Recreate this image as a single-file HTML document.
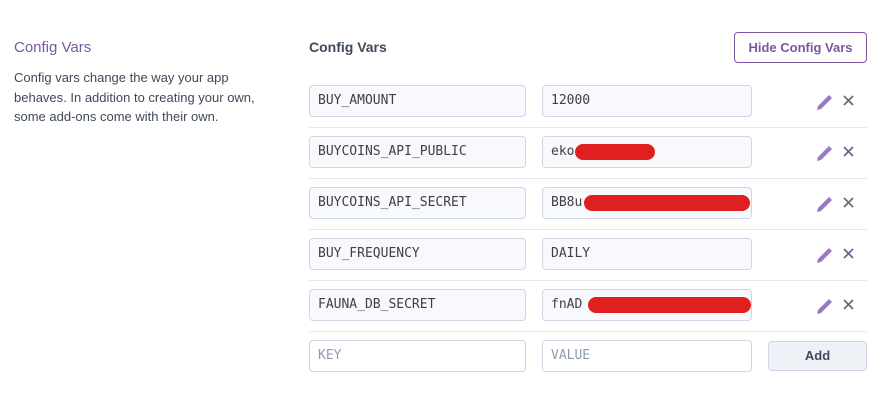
<!DOCTYPE html><html><head><style>
body{margin:0;width:883px;height:403px;background:#fff;font-family:"Liberation Sans",sans-serif;position:relative;overflow:hidden}
.a{position:absolute}
.t{left:14px;top:39px;font-size:15px;color:#79589f}
.d{left:14px;top:68px;width:270px;font-size:13px;line-height:19.5px;color:#3f4a5a}
.h{left:309px;top:39px;font-size:14px;font-weight:bold;color:#3f4a5a}
.btn{left:734px;top:32px;width:131px;height:29px;border:1px solid #79589f;border-radius:4px;color:#79589f;font-size:13px;font-weight:bold;text-align:center;line-height:29px}
.in{position:absolute;height:32px;border:1px solid #cfd7e6;border-radius:4px;background:#f7f9fd;box-sizing:border-box;font-family:"DejaVu Sans Mono",monospace;font-size:13px;color:#3f3f44;line-height:30px;padding-left:8px;overflow:hidden;white-space:nowrap}
.k{left:309px;width:217px}.v{left:542px;width:210px}
.line{left:309px;width:558px;height:1px;background:#e3e7f0}
.r{position:absolute;background:#e02020;border-radius:9px;height:16px}
.ph{background:#fff;color:#8f9bb3}
.add{left:768px;top:341px;width:99px;height:30px;border:1px solid #cfd7e6;border-radius:4px;background:#eef1f6;box-sizing:border-box;text-align:center;line-height:28px;font-size:13px;font-weight:bold;color:#3f4a5a}
</style></head><body>
<div class="a t">Config Vars</div>
<div class="a d">Config vars change the way your app behaves. In addition to creating your own, some add-ons come with their own.</div>
<div class="a h">Config Vars</div>
<div class="a btn">Hide Config Vars</div>

<div class="in k" style="top:85px">BUY_AMOUNT</div><div class="in v" style="top:85px">12000</div>
<div class="a line" style="top:127px"></div>
<div class="in k" style="top:136px">BUYCOINS_API_PUBLIC</div><div class="in v" style="top:136px">eko</div>
<div class="a line" style="top:178px"></div>
<div class="in k" style="top:187px">BUYCOINS_API_SECRET</div><div class="in v" style="top:187px">BB8u</div>
<div class="a line" style="top:229px"></div>
<div class="in k" style="top:238px">BUY_FREQUENCY</div><div class="in v" style="top:238px">DAILY</div>
<div class="a line" style="top:280px"></div>
<div class="in k" style="top:289px">FAUNA_DB_SECRET</div><div class="in v" style="top:289px">fnAD</div>
<div class="a line" style="top:331px"></div>
<div class="in k ph" style="top:340px">KEY</div><div class="in v ph" style="top:340px">VALUE</div>
<div class="a add">Add</div>

<div class="r" style="left:575px;top:144px;width:80px"></div>
<div class="r" style="left:584px;top:195px;width:166px"></div>
<div class="r" style="left:588px;top:297px;width:163px"></div>

<svg class="a" style="left:0;top:0" width="883" height="403">
<g id="ic">
<path d="M818 106 L829 95 L832 98 L821 109 L817 110 Z" fill="#9a77c8"/>
<path d="M844 96 L853 105 M853 96 L844 105" stroke="#5f6f86" stroke-width="1.8"/>
</g>
<use href="#ic" y="51"/><use href="#ic" y="102"/><use href="#ic" y="153"/><use href="#ic" y="204"/>
</svg>
</body></html>
